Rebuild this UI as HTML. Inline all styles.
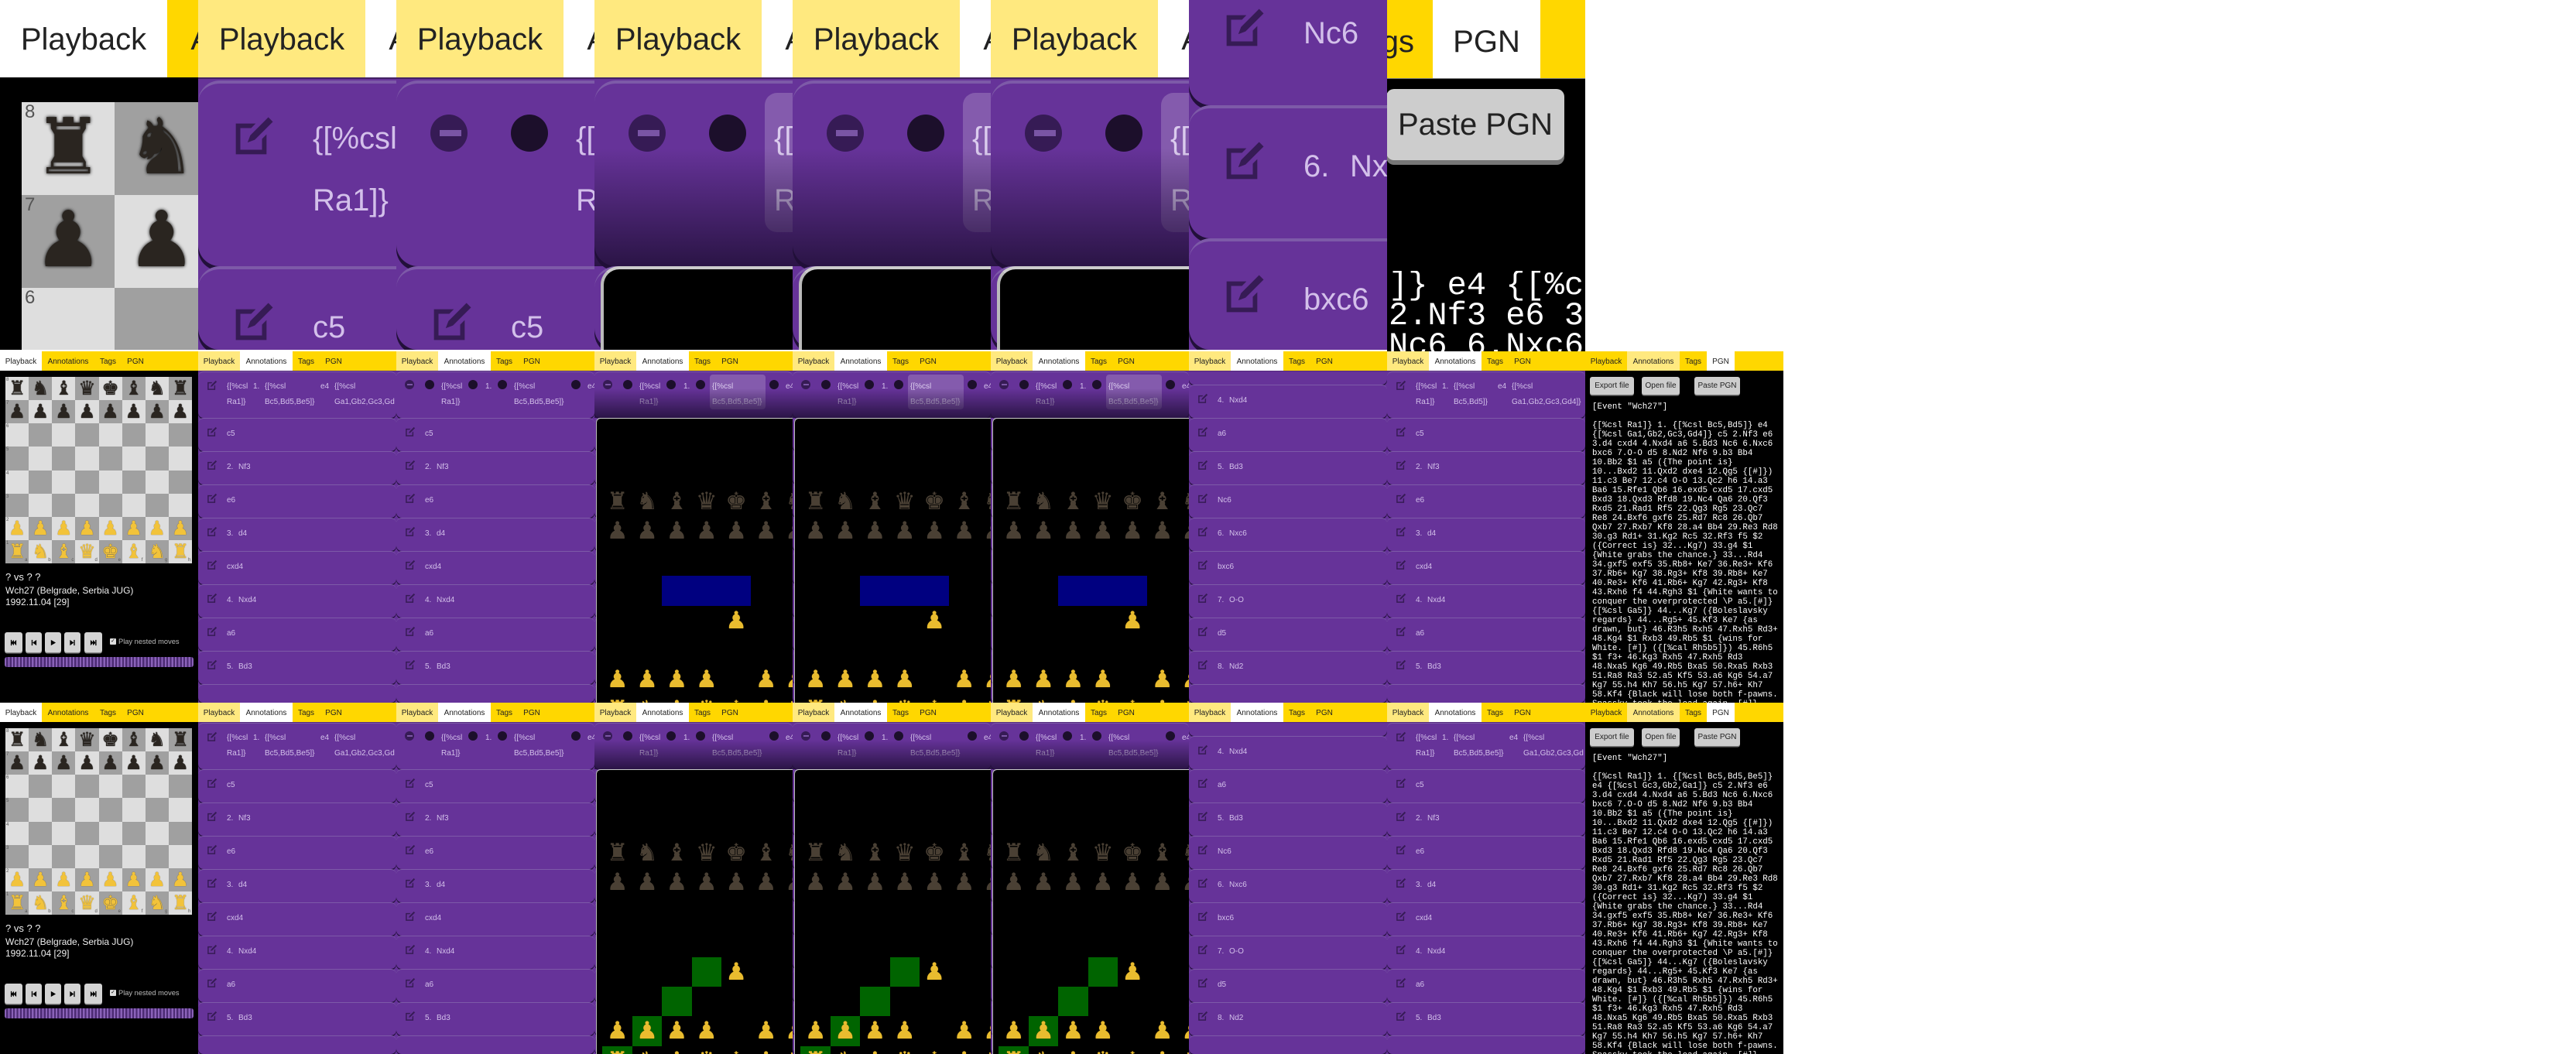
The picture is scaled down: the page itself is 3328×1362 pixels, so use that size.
<!DOCTYPE html>
<html><head><meta charset="utf-8">
<style>
html{margin:0;padding:0;width:3328px;height:1362px;overflow:hidden}
body{margin:0;padding:0;width:3328px;height:1362px;background:#fff;position:relative;overflow:hidden;font-family:"Liberation Sans",sans-serif}
.t{position:absolute;overflow:hidden}
.pg{position:absolute;left:0;top:0;width:256px;transform-origin:0 0;overflow:hidden}
.tb{position:absolute;left:0;top:0;width:256px;height:25px;background:#FFD700;z-index:10;box-shadow:0 0.5px 0 rgba(0,0,0,.35)}
.tab{position:absolute;top:0;height:25px;line-height:28px;font-size:10px;text-align:center;color:#222;white-space:nowrap}
.it{position:absolute;left:0;width:256px;background:#663399;border-radius:7px;border-top:1px solid #7d5aa8;box-shadow:0 1.5px 0 #22103a;box-sizing:border-box}
.tx{position:absolute;font-size:10px;color:#d3c0ea;line-height:20px;white-space:nowrap}
.mono{font-family:"Liberation Mono",monospace}
</style></head><body>
<script>
let VIS=1000;
const ok=t=>t<VIS-1;
const G={r:'\u265C',n:'\u265E',b:'\u265D',q:'\u265B',k:'\u265A',p:'\u265F'};
function pc(ch,x,y,sz,dark,gold,fs){
  const w=ch===ch.toUpperCase();
  const hh=Math.min(sz,VIS-y);
  return `<div style="position:absolute;left:${x}px;top:${y}px;width:${sz}px;height:${hh}px;overflow:hidden;line-height:${sz}px;text-align:center;font-family:'DejaVu Sans',sans-serif;font-size:${fs}px;color:${w?gold:dark};text-shadow:${w?'0 0 1px #6b4c00':'0 0 1px #000'}">${G[ch.toLowerCase()]}\uFE0E</div>`;
}
function tabs(active,light){
  const t=[['Playback',0,54],['Annotations',54,122],['Tags',122,157],['PGN',157,193]];
  return '<div class="tb">'+t.map(([n,a,b])=>`<div class="tab" style="left:${a}px;width:${b-a}px;background:${n==active?'#fff':n==light?'#FFE97F':'transparent'}">${n}</div>`).join('')+'</div>';
}
function T(x,y,w,h,s,ox,oy,fn){
  VIS=Math.floor(oy+h/s);
  const inner=fn();
  return `<div class="t" style="left:${x}px;top:${y}px;width:${w}px;height:${h}px"><div class="pg" style="height:${VIS}px;transform:scale(${s}) translate(${-ox}px,${-oy}px)">${inner}</div></div>`;
}
function bg(col){return `<div style="position:absolute;left:0;top:25px;width:256px;height:${VIS-25}px;background:${col}"></div>`;}
const START=['rnbqkbnr','pppppppp','........','........','........','........','PPPPPPPP','RNBQKBNR'];
function pbView(){
  let h=tabs('Playback',null)+bg('#000');
  const x0=7,y0=33,s=30.125;
  for(let r=0;r<8;r++)for(let c=0;c<8;c++){
    const light=(r+c)%2==0, t=y0+r*s;
    if(ok(t)) h+=`<div style="position:absolute;left:${x0+c*s}px;top:${t}px;width:${s+0.3}px;height:${Math.min(s+0.3,VIS-t)}px;background:${light?'#dedede':'#a0a0a0'}"></div>`;
  }
  for(let r=0;r<8;r++)for(let c=0;c<8;c++){
    const ch=START[r][c]; if(ch!='.'&&ok(y0+r*s)) h+=pc(ch,x0+c*s,y0+r*s,s,'#2a2520','#f2c33a',25);
  }
  for(let r=0;r<8;r++) if(ok(y0+r*s+8)) h+=`<div style="position:absolute;left:${x0+1}px;top:${y0+r*s}px;font-size:6px;line-height:8px;color:#555">${8-r}</div>`;
  if(ok(300)){
  'abcdefgh'.split('').forEach((f,c)=>{h+=`<div style="position:absolute;left:${x0+c*s+s-5}px;top:${y0+7*s+s-8}px;font-size:6px;line-height:8px;color:#555">${f}</div>`;});
  h+=`<div style="position:absolute;left:7px;top:284px;font-size:13px;color:#eee;line-height:16px">? vs ? ?</div>
  <div style="position:absolute;left:7px;top:302px;font-size:12px;color:#eee;line-height:15px">Wch27 (Belgrade, Serbia JUG)<br>1992.11.04 [29]</div>`;
  }
  if(ok(410)){
  const paths=["M1 1h1.5v8H1z M9 1v8L5 5z M5.5 1v8L1.5 5z","M2 1h1.5v8H2z M9 1v8L3.5 5z","M2 1v8l7-4z","M7 1h1.5v8H7z M1.5 1v8L7 5z","M8 1h1.5v8H8z M1 1v8L5 5z M4.5 1v8L8.5 5z"];
  const bx=[[6,23],[33,21],[58,21],[83,21],[109,23]];
  bx.forEach(([x,w],i)=>{h+=`<div style="position:absolute;left:${x}px;top:363px;width:${w}px;height:26px;background:#d4d4d4;border-radius:3px;box-shadow:0 1.5px 0 #888"><svg viewBox="0 0 10 10" width="9" height="9" style="position:absolute;left:${(w-9)/2}px;top:8.5px"><path d="${paths[i]}" fill="#000"/></svg></div>`;});
  h+=`<div style="position:absolute;left:142px;top:371px;width:8px;height:8px;background:#ddd;border-radius:1px;font-size:7px;line-height:8px;text-align:center;color:#000">✓</div>
  <div style="position:absolute;left:153px;top:369px;font-size:9.3px;line-height:12px;color:#bbb;white-space:nowrap">Play nested moves</div>
  <div style="position:absolute;left:6px;top:395px;width:244px;height:13px;border-radius:3px;background:repeating-linear-gradient(90deg,#8a62b8 0 2.2px,#4c2b73 2.2px 4.4px)"></div>`;
  }
  return h;
}
const EDIT=`<svg viewBox="0 0 24 24" width="14" height="14"><path d="M2 5h11l-2.5 2.5H4.5v12h12v-6l2.5-2.5V22H2z" fill="#361b55"/><path d="M20 1.5l2.5 2.5-10 10-4 1.5 1.5-4z" fill="#361b55"/></svg>`;
const MOVES=[['c5'],['2.','Nf3'],['e6'],['3.','d4'],['cxd4'],['4.','Nxd4'],['a6'],['5.','Bd3'],['Nc6'],['6.','Nxc6'],['bxc6'],['7.','O-O'],['d5'],['8.','Nd2'],['Nf6'],['9.','b3'],['Bb4'],['10.','Bb2'],['a5'],['11.','c3']];
function circ(x,minus){
  if(minus) return `<div style="position:absolute;left:${x}px;top:37px;width:12px;height:12px;border-radius:50%;background:#361b55"><div style="position:absolute;left:2.5px;top:5px;width:7px;height:2.2px;background:#7a55a5"></div></div>`;
  return `<div style="position:absolute;left:${x}px;top:37px;width:12px;height:12px;border-radius:50%;background:#1c0f2b"></div>`;
}
function tx(x,t,top){return `<div class="tx" style="left:${x}px;top:${top}px">${t}</div>`;}
function annView(o){
  o=o||{};
  const sc=o.scroll||0;
  let h=tabs('Annotations','Playback')+bg('#663399');
  let L=`<div style="position:absolute;left:0;top:${-sc}px;width:256px;height:${VIS+sc}px;overflow:hidden">`;
  L+=`<div class="it" style="top:26px;height:60px"></div>`;
  if(o.circ){
    L+=circ(11,1)+circ(37)+tx(58,'{[%csl<br>Ra1]}',36)+circ(93)+tx(115,'1.',36)+circ(131)+tx(152,'{[%csl<br>Bc5,Bd5,Be5]}',36)+circ(226)+tx(247,'e4',36);
  } else {
    const v=o.v2;
    L+=`<div style="position:absolute;left:11px;top:37px">${EDIT}</div>`+tx(37,'{[%csl<br>Ra1]}',36)+tx(71,'1.',36)+tx(86,v?'{[%csl<br>Bc5,Bd5]}':'{[%csl<br>Bc5,Bd5,Be5]}',36)+tx(v?143:158,'e4',36)+tx(v?161:176,v?'{[%csl<br>Ga1,Gb2,Gc3,Gd4]}':'{[%csl<br>Ga1,Gb2,Gc3,Gd',36);
  }
  MOVES.forEach((m,i)=>{
    const t=86+43*i;
    if(t-sc>=VIS-1) return;
    const hh=Math.min(43,VIS+sc-t);
    L+=`<div class="it" style="top:${t}px;height:${hh}px"></div>`;
    if(t+11-sc<VIS-15){
      L+=`<div style="position:absolute;left:11px;top:${t+11}px">${EDIT}</div>`;
      if(m.length==2) L+=tx(37,m[0],t+11)+tx(52,m[1],t+11); else L+=tx(37,m[0],t+11);
    }
  });
  if(o.hl!=null) L+=`<div style="position:absolute;left:${o.hl-3}px;top:30px;width:72px;height:45px;background:rgba(255,255,255,.2);border-radius:4px"></div>`;
  L+='</div>';
  h+=L;
  if(o.overlay){
    h+=`<div style="position:absolute;left:0;top:48px;width:256px;height:38px;background:linear-gradient(rgba(30,14,50,0),rgba(32,15,55,.85));z-index:3"></div>`;
    if(ok(86)) h+=`<div style="position:absolute;left:2px;top:86px;width:320px;height:${VIS-86}px;background:#000;border-top:1px solid #ccc;border-left:1px solid #bbb;border-top-left-radius:6px;z-index:4"></div>`;
    const x0=10.4,y0=175,s=38.4;
    let b='';
    if(o.overlay=='blue'){ if(ok(y0+3*s)) b+=`<div style="position:absolute;left:${x0+2*s}px;top:${y0+3*s}px;width:${3*s}px;height:${s}px;background:#000080"></div>`;}
    else [[3,4],[2,5],[1,6],[0,7]].forEach(([c,r])=>{const t=y0+r*s; if(ok(t)) b+=`<div style="position:absolute;left:${x0+c*s}px;top:${t}px;width:${s}px;height:${Math.min(s,VIS-t)}px;background:#006400"></div>`;});
    const pos=['rnbqkbnr','pppppppp','........','........','....P...','........','PPPP.PPP','RNBQKBNR'];
    for(let r=0;r<8;r++)for(let c=0;c<8;c++){const ch=pos[r][c]; if(ch!='.'&&ok(y0+r*s)) b+=pc(ch,x0+c*s,y0+r*s,s,'#4a4034','#e9bc2f',31);}
    h+=`<div style="position:absolute;left:0;top:0;width:256px;height:${VIS}px;overflow:hidden;z-index:5">${b}</div>`;
  }
  return h;
}
const PGN2=`{[%csl Ra1]} 1. {[%csl Bc5,Bd5]} e4 {[%csl Ga1,Gb2,Gc3,Gd4]} c5 2.Nf3 e6 3.d4 cxd4 4.Nxd4 a6 5.Bd3 Nc6 6.Nxc6 bxc6 7.O-O d5 8.Nd2 Nf6 9.b3 Bb4 10.Bb2 $1 a5 ({The point is} 10...Bxd2 11.Qxd2 dxe4 12.Qg5 {[#]}) 11.c3 Be7 12.c4 O-O 13.Qc2 h6 14.a3 Ba6 15.Rfe1 Qb6 16.exd5 cxd5 17.cxd5 Bxd3 18.Qxd3 Rfd8 19.Nc4 Qa6 20.Qf3 Rxd5 21.Rad1 Rf5 22.Qg3 Rg5 23.Qc7 Re8 24.Bxf6 gxf6 25.Rd7 Rc8 26.Qb7 Qxb7 27.Rxb7 Kf8 28.a4 Bb4 29.Re3 Rd8 30.g3 Rd1+ 31.Kg2 Rc5 32.Rf3 f5 $2 ({Correct is} 32...Kg7) 33.g4 $1 {White grabs the chance.} 33...Rd4 34.gxf5 exf5 35.Rb8+ Ke7 36.Re3+ Kf6 37.Rb6+ Kg7 38.Rg3+ Kf8 39.Rb8+ Ke7 40.Re3+ Kf6 41.Rb6+ Kg7 42.Rg3+ Kf8 43.Rxh6 f4 44.Rgh3 $1 {White wants to conquer the overprotected \\P a5.[#]} {[%csl Ga5]} 44...Kg7 ({Boleslavsky regards} 44...Rg5+ 45.Kf3 Ke7 {as drawn, but} 46.R3h5 Rxh5 47.Rxh5 Rd3+ 48.Kg4 $1 Rxb3 49.Rb5 $1 {wins for White. [#]} ({[%cal Rh5b5]}) 45.R6h5 $1 f3+ 46.Kg3 Rxh5 47.Rxh5 Rd3 48.Nxa5 Kg6 49.Rb5 Bxa5 50.Rxa5 Rxb3 51.Ra8 Ra3 52.a5 Kf5 53.a6 Kg6 54.a7 Kg7 55.h4 Kh7 56.h5 Kg7 57.h6+ Kh7 58.Kf4 {Black will lose both f-pawns. Spassky took the lead again. [#]}`;
const PGN3=PGN2.replace('{[%csl Bc5,Bd5]} e4 {[%csl Ga1,Gb2,Gc3,Gd4]}','{[%csl Bc5,Bd5,Be5]} e4 {[%csl Gc3,Gb2,Ga1]}');
function pgnView(txt){
  let h=tabs('PGN','Annotations')+bg('#000');
  [['Export file',6,57],['Open file',73,49],['Paste PGN',141,59]].forEach(([n,x,w])=>{h+=`<div style="position:absolute;left:${x}px;top:33px;width:${w}px;height:23px;background:#cdcdcd;border-radius:3px;box-shadow:0 1.5px 0 #777;font-size:10px;line-height:23px;text-align:center;color:#222;white-space:nowrap">${n}</div>`;});
  h+=`<div class="mono" style="position:absolute;left:9px;top:66px;font-size:10.8px;line-height:12px;color:#fff;white-space:nowrap">[Event "Wch27"]</div>`;
  h+=`<div class="mono" style="position:absolute;left:9px;top:90px;width:243px;height:${VIS-90}px;overflow:hidden;font-size:10.8px;line-height:12px;color:#fff;white-space:normal">${txt}</div>`;
  return h;
}
let out='';
out+=T(0,0,256,454,4,0,0,pbView);
out+=T(256,0,256,454,4,0,0,()=>annView({}));
out+=T(512,0,256,454,4,0,0,()=>annView({circ:1}));
[768,1024,1280].forEach(x=>{out+=T(x,0,256,454,4,0,0,()=>annView({circ:1,hl:58,overlay:'blue'}));});
out+=T(1536,0,256,454,4,0,439,()=>annView({}));
out+=`<div class="t" style="left:1792px;top:0;width:256px;height:454px;background:#000">
<div style="position:absolute;left:0;top:0;width:256px;height:101px;background:#FFD700;border-bottom:1px solid #777"></div>
<div style="position:absolute;left:-100px;top:0;width:135px;height:101px;line-height:108px;font-size:40px;color:#222;text-align:right">Tags</div>
<div style="position:absolute;left:59px;top:0;width:139px;height:101px;line-height:108px;font-size:40px;color:#222;text-align:center;background:#fff">PGN</div>
<div style="position:absolute;left:-1px;top:115px;width:230px;height:92px;background:#cdcdcd;border-radius:10px;box-shadow:0 6px 0 #777;font-size:40px;line-height:92px;text-align:center;color:#222;white-space:nowrap">Paste PGN</div>
<div class="mono" style="position:absolute;left:2px;top:350px;width:256px;height:104px;overflow:hidden;font-size:42px;line-height:39px;color:#fff;white-space:pre">]} e4 {[%csl
2.Nf3 e6 3.d4
Nc6 6.Nxc6 b</div></div>`;
[[454,'blue',PGN2],[908,'green',PGN3]].forEach(([y,ov,pg],ri)=>{
  out+=T(0,y,256,454,1,0,0,pbView);
  out+=T(256,y,256,454,1,0,0,()=>annView({}));
  out+=T(512,y,256,454,1,0,0,()=>annView({circ:1}));
  [768,1024,1280].forEach(x=>{out+=T(x,y,256,454,1,0,0,()=>annView({circ:1,hl:ri==0?152:null,overlay:ov}));});
  out+=T(1536,y,256,454,1,0,0,()=>annView({scroll:258}));
  out+=T(1792,y,256,454,1,0,0,()=>annView({v2:ri==0}));
  out+=T(2048,y,256,454,1,0,0,()=>pgnView(pg));
});
document.body.insertAdjacentHTML('beforeend',out);
</script>
</body></html>
